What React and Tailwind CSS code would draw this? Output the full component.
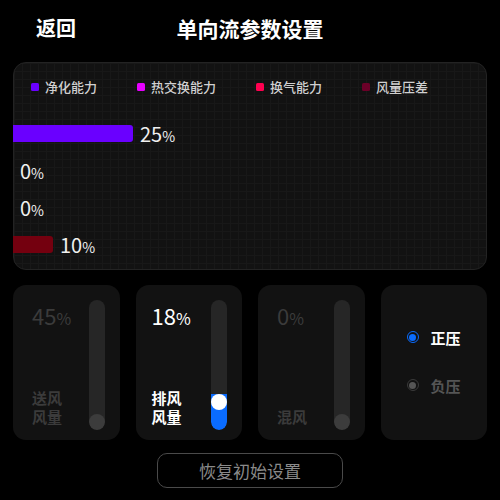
import React from "react";

const font = { fontFamily: '"Noto Sans CJK SC", "Noto Sans", sans-serif' };

function Pct({ v, className = "", big = "text-[19px]", small = "text-[14px]" }) {
  return (
    <span className={"leading-none whitespace-nowrap " + className}>
      <span className={big}>{v}</span>
      <span className={small}>%</span>
    </span>
  );
}

function Legend({ color, label }) {
  return (
    <div className="flex items-center gap-[6px]">
      <div className={"w-[8px] h-[8px] rounded-[1.5px] " + color} />
      <span className="text-[13px] font-medium text-[#d0d0d0] leading-none">{label}</span>
    </div>
  );
}

function BarRow({ w, color, v }) {
  return (
    <div className="flex items-center h-[17px]">
      {w > 0 ? (
        <div className={"h-[17px] rounded-r-[3px] " + color} style={{ width: w }} />
      ) : null}
      <Pct v={v} className="ml-[7px] text-[#f0f0f0]" big="text-[20px]" small="text-[14px]" />
    </div>
  );
}

function Track({ active }) {
  return (
    <div className="w-[16px] h-[130px] rounded-full bg-[#262626] flex flex-col justify-end overflow-hidden">
      {active ? (
        <div className="h-[36px] w-[16px] rounded-b-full bg-[#0a6cff] flex flex-col items-center">
          <div className="w-[16px] h-[16px] rounded-full bg-white" />
        </div>
      ) : (
        <div className="w-[16px] h-[16px] rounded-full bg-[#3c3c3c]" />
      )}
    </div>
  );
}

function SliderCard({ v, label, active, pl }) {
  const tc = active ? "text-white" : "text-[#3b3b3b]";
  return (
    <div className={"h-[155px] rounded-[13px] bg-[#121212] flex justify-between pr-[15px] pt-[15px] pb-[10px] " + pl}>
      <div className="flex flex-col justify-between pt-[4px] pb-[4px]">
        <Pct v={v} className={tc} big="text-[22px]" small="text-[16px]" />
        <div className={"text-[15px] font-bold leading-[19px] " + tc}>
          {label.map((l) => (
            <div key={l} className="h-[19px]">{l}</div>
          ))}
        </div>
      </div>
      <Track active={active} />
    </div>
  );
}

function Radio({ on, label }) {
  return (
    <div className="flex items-center gap-[12px]">
      <div
        className={
          "w-[12px] h-[12px] rounded-full border-[1.5px] flex items-center justify-center " +
          (on ? "border-[#0a6cff]" : "border-[#3a3a3a]")
        }
      >
        <div className={"w-[7px] h-[7px] rounded-full " + (on ? "bg-[#0a6cff]" : "bg-[#555]")} />
      </div>
      <span className={"text-[15px] font-bold leading-none " + (on ? "text-white" : "text-[#555]")}>
        {label}
      </span>
    </div>
  );
}

export default function App() {
  return (
    <div className="w-[500px] h-[500px] bg-black overflow-hidden" style={font}>
      <div className="h-[57px] grid grid-cols-[1fr_auto_1fr] items-center pb-[1px]">
        <span className="pl-[36px] text-[20px] font-bold text-white leading-none">返回</span>
        <span className="text-[21px] font-bold text-white leading-none">单向流参数设置</span>
        <span />
      </div>
      <div className="mx-[13px] mt-[5px] h-[208px] rounded-[13px] border border-[#232323] bg-[#121212] bg-[linear-gradient(to_right,#181818_1px,transparent_1px),linear-gradient(to_bottom,#181818_1px,transparent_1px)] bg-[size:8px_8px] flex flex-col">
        <div className="flex items-center gap-[40px] pl-[17px] pt-[17px]">
          <Legend color="bg-[#6a00ff]" label="净化能力" />
          <Legend color="bg-[#e600ff]" label="热交换能力" />
          <Legend color="bg-[#ff0050]" label="换气能力" />
          <Legend color="bg-[#6b0028]" label="风量压差" />
        </div>
        <div className="flex flex-col gap-[20px] mt-[32px] -ml-[1px]">
          <BarRow w={120} color="bg-[#6a00ff]" v="25" />
          <BarRow w={0} v="0" />
          <BarRow w={0} v="0" />
          <BarRow w={40} color="bg-[#74000f]" v="10" />
        </div>
      </div>
      <div className="mx-[13px] mt-[15px] grid grid-cols-4 gap-[16px]">
        <SliderCard v="45" label={["送风", "风量"]} pl="pl-[19px]" />
        <SliderCard v="18" label={["排风", "风量"]} active pl="pl-[16px]" />
        <SliderCard v="0" label={["混风"]} pl="pl-[19px]" />
        <div className="h-[155px] rounded-[13px] bg-[#121212] flex flex-col justify-center gap-[33px] pl-[26px] pb-[3px]">
          <Radio on label="正压" />
          <Radio label="负压" />
        </div>
      </div>
      <div className="flex justify-center mt-[13px]">
        <div className="w-[186px] h-[35px] rounded-[10px] border border-[#4a4a4a] flex items-center justify-center text-[17px] text-[#8a8a8a] leading-none">
          恢复初始设置
        </div>
      </div>
    </div>
  );
}
